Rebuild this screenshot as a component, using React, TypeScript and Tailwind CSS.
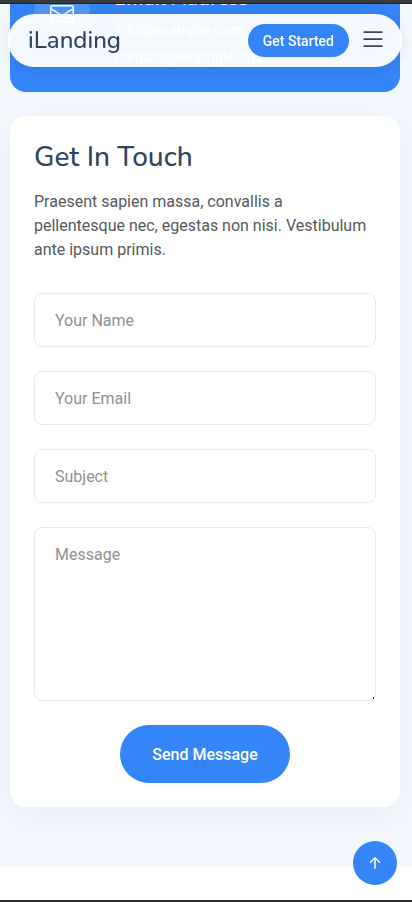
import { BsArrowUpShort, BsEnvelope, BsList } from "react-icons/bs";

const heading = "font-[Nunito,Lato,sans-serif]";
const field =
  "block w-full rounded-lg border border-[#e9eaeb] bg-white px-5 text-base leading-6 text-[#444a50] placeholder:text-[#8f9192] outline-none focus:border-[#3485f7]";

function Header() {
  return (
    <header className="fixed top-3.5 right-2.5 left-2 z-20 flex h-[53px] items-center rounded-full bg-white/95 pr-[15px] pl-5 shadow-[0_2px_15px_rgba(0,0,0,0.1)]">
      <a href="#top" className={`${heading} mr-auto pb-0.5 text-2xl leading-8 font-medium text-[#2d465e]`}>
        iLanding
      </a>
      <a
        href="#contact"
        className="flex h-[33px] items-center rounded-full bg-[#3485f7] px-[15px] text-sm font-medium text-white"
      >
        Get Started
      </a>
      <button type="button" aria-label="Open menu" className="ml-2.5 pb-1 text-[#3f444b]">
        <BsList size={28} />
      </button>
    </header>
  );
}

function EmailCard() {
  return (
    <div className="flex h-[88px] flex-col justify-end overflow-hidden rounded-b-2xl bg-[#3485f7] px-6 pb-6 text-white">
      <div className="flex items-start gap-6">
        <span className="flex size-14 shrink-0 items-center justify-center rounded-full bg-white/15">
          <BsEnvelope size={24} />
        </span>
        <div className="text-[15px] leading-[22px]">
          <h4 className={`${heading} mb-[7px] text-xl leading-[26px] font-bold`}>Email Address</h4>
          <p className="mb-[5px]">info@example.com</p>
          <p>contact@example.com</p>
        </div>
      </div>
    </div>
  );
}

function ContactForm() {
  return (
    <div className="rounded-2xl bg-white p-6 shadow-[0_10px_40px_rgba(0,0,0,0.05)]">
      <h3 className={`${heading} mb-4 text-[28px] leading-[34px] font-medium text-[#2d465e]`}>Get In Touch</h3>
      <p className="leading-6 text-[#55585b]">
        Praesent sapien massa, convallis a pellentesque nec, egestas non nisi. Vestibulum ante ipsum primis.
      </p>
      <form className="mt-[31px] flex flex-col gap-6" onSubmit={(e) => e.preventDefault()}>
        <input type="text" name="name" aria-label="Your Name" placeholder="Your Name" className={`${field} h-[54px]`} />
        <input type="email" name="email" aria-label="Your Email" placeholder="Your Email" className={`${field} h-[54px]`} />
        <input type="text" name="subject" aria-label="Subject" placeholder="Subject" className={`${field} h-[54px]`} />
        <div className="relative">
          <textarea
            name="message"
            aria-label="Message"
            placeholder="Message"
            className={`${field} h-[174px] resize-none py-[15px]`}
          />
          <span className="absolute right-0.5 bottom-0.5 h-0.5 w-px bg-[#444444]" />
        </div>
        <button
          type="submit"
          className="h-[58px] self-center rounded-full bg-[#3485f7] px-8 pt-0.5 text-base font-medium text-white"
        >
          Send Message
        </button>
      </form>
    </div>
  );
}

export default function App() {
  return (
    <div id="top" className="flex min-h-screen flex-col bg-white font-[Roboto,sans-serif] text-base">
      <div className="h-1 border-b border-[#222222] bg-[#3a3a3a]" />
      <Header />
      <main id="contact" className="flex flex-col gap-6 bg-[#f3f8ff] pr-3 pb-[60px] pl-2.5">
        <EmailCard />
        <ContactForm />
      </main>
      <div className="mt-auto h-0.5 bg-[#2b2b2d]" />
      <a
        href="#top"
        aria-label="Back to top"
        className="fixed right-[15px] bottom-[17px] z-10 flex size-11 items-center justify-center rounded-full bg-[#3485f7] text-white"
      >
        <BsArrowUpShort size={24} />
      </a>
    </div>
  );
}
